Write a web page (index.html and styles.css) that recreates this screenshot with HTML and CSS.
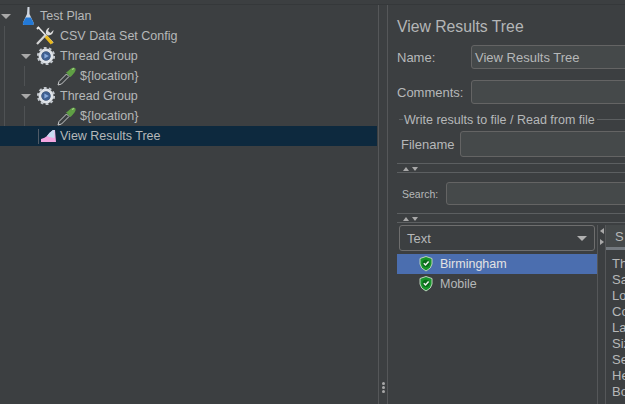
FILE: index.html
```html
<!DOCTYPE html>
<html>
<head>
<meta charset="utf-8">
<title>View Results Tree</title>
<link rel="stylesheet" href="styles.css">
</head>
<body>
<svg class="defs" width="0" height="0">
  <defs>
    <g id="gear">
      <circle cx="9" cy="9" r="6" fill="none" stroke="#dfe3e8" stroke-width="3"/>
      <circle cx="9" cy="9" r="8.1" fill="none" stroke="#c4c9cf" stroke-width="2" stroke-dasharray="2.8 2.3"/>
      <circle cx="9" cy="9" r="4.6" fill="#3f5f90"/>
      <path d="M7.4 6.4 L11.8 9 L7.4 11.6Z" fill="#88abdc"/>
    </g>
    <g id="dropper">
      <path d="M1 19 L2 15.5 L9.5 8 L12 10.5 L4.5 18Z" fill="#3b3f41" stroke="#c9cbcc" stroke-width="1"/>
      <path d="M9 6.5 L13.5 11 L15 9.5 L17.5 6.5 Q19.5 3.5 18 2 Q16 .5 13.5 3 L10.5 5.5Z" fill="#5f9f44"/>
      <path d="M15 3.5 L17 2.5" stroke="#a9d48c" stroke-width="1.2"/>
    </g>
    <g id="shield">
      <path d="M7 .5 L13 2.5 V8 Q12.5 12.5 7 15 Q1.5 12.5 1 8 V2.5Z" fill="#17952a" stroke="#bcd0bc" stroke-width="1"/>
      <circle cx="7" cy="7.3" r="3.6" fill="#0a6a1a"/>
      <path d="M4.8 7.3 L6.5 9 L9.6 5.6" fill="none" stroke="#f2f2f2" stroke-width="1.5"/>
    </g>
  </defs>
</svg>
<div class="app">
  <div class="tree-pane">
    <div class="tree">
      <div class="row level0">
        <span class="twist"></span>
        <svg class="ico" width="20" height="20" viewBox="0 0 20 20"><path d="M8.5 1 L10.5 1 L10.5 8 L14.5 16.5 Q15.2 19 13.5 19 L5 19 Q3.3 19 4 16.5 L8 8Z" fill="#cfd6e0"/><path d="M6.8 11.5 L11.8 11.5 L14.5 16.5 Q15.2 19 13.5 19 L5 19 Q3.3 19 4 16.5Z" fill="#2379d6"/></svg>
        <span class="lbl">Test Plan</span>
      </div>
      <div class="row level1 guide-a">
        <span class="twist none"></span>
        <svg class="ico" width="20" height="20" viewBox="0 0 20 20"><path d="M3 1 L18 17" stroke="#e8e8e8" stroke-width="1.6"/><path d="M2 3 L4 1" stroke="#e8e8e8" stroke-width="2"/><path d="M10.5 10 L17 17.5" stroke="#e8b81e" stroke-width="3.4"/><path d="M2 18 L11 8.5" stroke="#d4d4d4" stroke-width="2.2"/><path d="M11 8 Q10 3 14.5 1.5 L13 5 L15.5 7 L18.5 4 Q18.5 9 13 9.5Z" fill="#dcdcdc"/></svg>
        <span class="lbl">CSV Data Set Config</span>
      </div>
      <div class="row level1b guide-a">
        <span class="twist"></span>
        <svg class="ico" width="18" height="18" viewBox="0 0 18 18"><use href="#gear"/></svg>
        <span class="lbl">Thread Group</span>
      </div>
      <div class="row level2 guide-ab">
        <svg class="ico" width="20" height="20" viewBox="0 0 20 20"><use href="#dropper"/></svg>
        <span class="lbl">${location}</span>
      </div>
      <div class="row level1b guide-a">
        <span class="twist"></span>
        <svg class="ico" width="18" height="18" viewBox="0 0 18 18"><use href="#gear"/></svg>
        <span class="lbl">Thread Group</span>
      </div>
      <div class="row level2 guide-ab">
        <svg class="ico" width="20" height="20" viewBox="0 0 20 20"><use href="#dropper"/></svg>
        <span class="lbl">${location}</span>
      </div>
      <div class="row level1c selected">
        <svg class="ico" width="17" height="14" viewBox="0 0 17 14"><path d="M1 13 L1 10 Q5 9 7 7 Q10 3 13 1 L15 1 L16 13Z" fill="#f2a6e0"/><path d="M7 7 Q10 3 13 1 L14.5 1 L14.5 9 L9 8Z" fill="#c7dcf2"/></svg>
        <span class="lbl">View Results Tree</span>
      </div>
    </div>
  </div>
  <div class="divider">
    <span class="dot"></span><span class="dot"></span><span class="dot"></span>
  </div>
  <div class="main">
    <h1 class="title">View Results Tree</h1>
    <div class="field name-field">
      <label class="field-label">Name:</label>
      <div class="input name-input">View Results Tree</div>
    </div>
    <div class="field comments-field">
      <label class="field-label">Comments:</label>
      <div class="input name-input"></div>
    </div>
    <div class="legend"><span class="legend-text">Write results to file / Read from file</span></div>
    <div class="file-row">
      <label class="file-label">Filename</label>
      <div class="input file-input"></div>
    </div>
    <div class="split"><span class="up"></span><span class="down"></span></div>
    <div class="search-row">
      <label class="search-label">Search:</label>
      <div class="input search-input"></div>
    </div>
    <div class="split split2"><span class="up"></span><span class="down"></span></div>
    <div class="results">
      <div class="list-col">
        <div class="combo"><span>Text</span><span class="combo-arrow"></span></div>
        <div class="item active">
          <svg class="shield" width="14" height="16" viewBox="0 0 14 16"><use href="#shield"/></svg>
          <span>Birmingham</span>
        </div>
        <div class="item">
          <svg class="shield" width="14" height="16" viewBox="0 0 14 16"><use href="#shield"/></svg>
          <span>Mobile</span>
        </div>
      </div>
      <div class="vsplit"><span class="left"></span><span class="right"></span></div>
      <div class="detail">
        <div class="tab">S</div>
        <div class="tab-rule"></div>
        <div class="lines">
          <div>Th</div><div>Sa</div><div>Lo</div><div>Co</div><div>La</div><div>Siz</div><div>Se</div><div>He</div><div>Bo</div>
        </div>
      </div>
    </div>
  </div>
</div>
</body>
</html>
```
FILE: styles.css
```css
* { box-sizing: border-box; }
html, body { margin: 0; height: 100%; overflow: hidden; }
body { background: #3c3f41; color: #b6b8b9; font-family: "Liberation Sans", Arial, sans-serif; font-size: 13px; }
.defs { display: block; height: 0; }
.app { display: flex; width: 625px; height: 400px; border-top: 1px solid #35383a; margin-top: 4px; overflow: hidden; }

.tree-pane { width: 377px; flex: none; padding-top: 1px; }
.tree { display: flex; flex-direction: column; }
.row { height: 20px; display: flex; align-items: center; }
.row .lbl { white-space: nowrap; font-size: 12.5px; }
.ico { flex: none; }
.twist { width: 0; height: 0; border-left: 5px solid transparent; border-right: 5px solid transparent; border-top: 5px solid #a9a9a9; flex: none; }
.twist.none { visibility: hidden; }
.guide-a { background: linear-gradient(#4f5254, #4f5254) 4px 0 / 1px 100% no-repeat; }
.guide-ab { background: linear-gradient(#4f5254, #4f5254) 4px 0 / 1px 100% no-repeat, linear-gradient(#4f5254, #4f5254) 24px 0 / 1px 100% no-repeat; }
.level0 { padding-left: 1px; }
.level0 .twist { margin-right: 8px; }
.level0 .ico { margin-right: 1px; }
.level1 { padding-left: 20px; }
.level1 .twist { margin-right: 6px; }
.level1 .ico { margin-right: 5px; margin-left: -1px; }
.level1b { padding-left: 21px; }
.level1b .twist { margin-right: 6px; }
.level1b .ico { margin-right: 5px; }
.level2 { padding-left: 57px; }
.level2 .ico { margin-right: 3px; }
.level1c { padding-left: 38px; }
.level1c .ico { margin-left: 2px; margin-right: 3px; }
.selected { background: linear-gradient(#4f5a66, #4f5a66) 38px 3px / 1px 15px no-repeat, #0d293e; }

.divider { width: 10px; flex: none; border-left: 1px solid #555759; border-right: 1px solid #555759; display: flex; flex-direction: column; align-items: center; justify-content: flex-end; gap: 1px; padding-bottom: 11px; margin-left: 1px; background: #3c3f41; }
.dot { width: 3px; height: 3px; border-radius: 50%; background: #a8a8a8; }

.main { flex: 1; min-width: 0; padding-left: 9px; overflow: hidden; }
.title { margin: 0; height: 40px; padding-top: 12px; font-size: 15.75px; font-weight: normal; line-height: 20px; color: #b4b6b7; white-space: nowrap; }
.field { display: flex; align-items: center; height: 24px; }
.comments-field { margin-top: 11px; }
.field-label { width: 74px; flex: none; }
.input { height: 100%; width: 300px; flex: none; background: #45494a; border: 1px solid #646464; border-radius: 3px; padding-left: 3px; display: flex; align-items: center; white-space: nowrap; }
.legend { height: 17px; margin-top: 7px; margin-left: 2px; display: flex; align-items: center; position: relative; margin-right: -20px; }
.legend::before { content: ""; width: 4px; height: 1px; background: #5c5f61; margin-right: 1px; }
.legend::after { content: ""; flex: 1; height: 1px; background: #5c5f61; margin-left: 2px; }
.legend-text { white-space: nowrap; font-size: 12.5px; }
.file-row { display: flex; align-items: center; height: 26px; margin-top: 3px; padding-left: 4px; }
.file-label { width: 59px; flex: none; padding-top: 1px; }
.file-input { width: 300px; }
.split { height: 10px; margin-top: 6px; border-top: 1px solid #5c5f61; border-bottom: 1px solid #5c5f61; display: flex; align-items: center; gap: 3px; padding-left: 6px; padding-top: 1px; margin-right: -20px; }
.up, .down { width: 0; height: 0; border-left: 3.5px solid transparent; border-right: 3.5px solid transparent; }
.up { border-bottom: 4px solid #a9a9a9; }
.down { border-top: 4px solid #a9a9a9; }
.search-row { display: flex; align-items: center; height: 23px; margin-top: 9px; padding-left: 5px; }
.search-label { width: 44px; flex: none; font-size: 10.5px; }
.search-input { width: 300px; }
.split2 { margin-top: 8px; }
.results { display: flex; height: 180px; margin-top: 2px; }
.list-col { flex: none; border-right: 1px solid #555759; width: 201px; }
.combo { height: 26px; margin: 0 2px 3px; width: 196px; border: 1px solid #6e6e6e; border-radius: 3px; display: flex; align-items: center; justify-content: space-between; padding: 1px 7px 0; }
.combo-arrow { width: 0; height: 0; border-left: 5px solid transparent; border-right: 5px solid transparent; border-top: 5px solid #b0b0b0; }
.item { height: 20px; display: flex; align-items: center; padding-left: 22px; gap: 7px; font-size: 12.5px; white-space: nowrap; }
.item.active { background: #4b6eaf; color: #e3e3e3; }
.shield { flex: none; }
.vsplit { width: 8px; flex: none; border-right: 1px solid #555759; display: flex; flex-direction: column; align-items: center; gap: 5px; padding-top: 3px; }
.left, .right { width: 0; height: 0; border-top: 3.5px solid transparent; border-bottom: 3.5px solid transparent; }
.left { border-right: 4px solid #a9a9a9; }
.right { border-left: 4px solid #a9a9a9; }
.detail { flex: 1; min-width: 0; overflow: hidden; }
.tab { height: 22px; padding-left: 9px; background: #45494a; display: flex; align-items: center; }
.tab-rule { height: 3px; background: #747a80; }
.lines { padding: 6px 0 0 6px; font-size: 13px; line-height: 16px; }
```
